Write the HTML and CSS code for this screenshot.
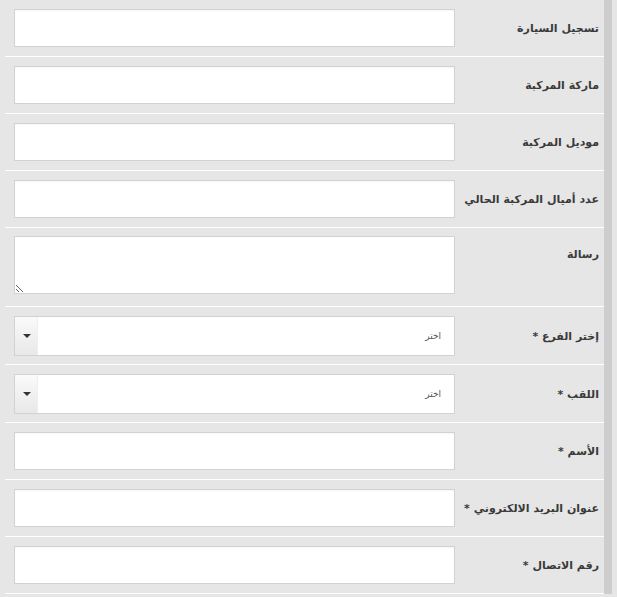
FILE: index.html
```html
<!DOCTYPE html>
<html lang="ar" dir="rtl">
<head>
  <meta charset="UTF-8" />
  <title>نموذج حجز</title>
  <link rel="stylesheet" href="styles.css">
</head>
<body>
  <div class="page">
    <form class="form">
      <div class="row">
        <label class="label">تسجيل السيارة</label>
        <div class="field"><input type="text" class="input" /></div>
      </div>
      <div class="row">
        <label class="label">ماركة المركبة</label>
        <div class="field"><input type="text" class="input" /></div>
      </div>
      <div class="row">
        <label class="label">موديل المركبة</label>
        <div class="field"><input type="text" class="input" /></div>
      </div>
      <div class="row">
        <label class="label">عدد أميال المركبة الحالي</label>
        <div class="field"><input type="text" class="input" /></div>
      </div>
      <div class="row row-text">
        <label class="label label-top">رسالة</label>
        <div class="field"><textarea class="textarea"></textarea></div>
      </div>
      <div class="row row-select">
        <label class="label">إختر الفرع *</label>
        <div class="field">
          <div class="select">
            <span class="select-value">اختر</span>
            <span class="select-arrow"></span>
          </div>
        </div>
      </div>
      <div class="row row-select">
        <label class="label">اللقب *</label>
        <div class="field">
          <div class="select">
            <span class="select-value">اختر</span>
            <span class="select-arrow"></span>
          </div>
        </div>
      </div>
      <div class="row">
        <label class="label">الأسم *</label>
        <div class="field"><input type="text" class="input" /></div>
      </div>
      <div class="row">
        <label class="label">عنوان البريد الالكتروني *</label>
        <div class="field"><input type="email" class="input" /></div>
      </div>
      <div class="row">
        <label class="label">رقم الاتصال *</label>
        <div class="field"><input type="text" class="input" /></div>
      </div>
    </form>
  </div>
</body>
</html>
```
FILE: styles.css
```css
body {
  margin: 0;
  padding: 0;
  background-color: #e6e6e6;
  font-family: "DejaVu Sans", "Liberation Sans", sans-serif;
}

.page {
  width: 617px;
  height: 597px;
  overflow: hidden;
  background: #e6e6e6;
}

.form {
  width: 604px;
  margin-right: 5px;
  border-right: 8px solid #cdcdcd;
}

.row {
  display: flex;
  align-items: center;
  padding: 9px 0;
  border-bottom: 1px solid #fff;
  margin-left: 5px;
}

.label {
  width: 149px;
  padding-right: 5px;
  box-sizing: border-box;
  font-size: 11px;
  font-weight: bold;
  color: #3a3a3a;
}

.label-top {
  align-self: flex-start;
  padding-top: 12px;
}

.field {
  width: 441px;
}

.input {
  display: block;
  width: 441px;
  height: 38px;
  box-sizing: border-box;
  border: 1px solid #d2d2d2;
  background: #fff;
  box-shadow: inset 0 1px 2px rgba(0, 0, 0, 0.04);
  margin: 0;
}

.row-text {
  padding: 8px 0 12px;
}

.textarea {
  display: block;
  width: 441px;
  height: 58px;
  box-sizing: border-box;
  border: 1px solid #d2d2d2;
  background: #fff;
  margin: 0;
  resize: vertical;
}

.row-select {
  padding: 9px 0 8px;
}

.select {
  display: flex;
  align-items: center;
  height: 40px;
  box-sizing: border-box;
  border: 1px solid #d2d2d2;
  background: #fff;
}

.select-value {
  flex: 1;
  padding-right: 13px;
  font-size: 9px;
  color: #555;
}

.select-arrow {
  width: 22px;
  height: 100%;
  border-right: 1px solid #efefef;
  background: linear-gradient(to bottom, #fafafa, #e8e8e8);
  position: relative;
}

.select-arrow::after {
  content: "";
  position: absolute;
  left: 8px;
  top: 17px;
  border-left: 4px solid transparent;
  border-right: 4px solid transparent;
  border-top: 4px solid #333;
}
```
